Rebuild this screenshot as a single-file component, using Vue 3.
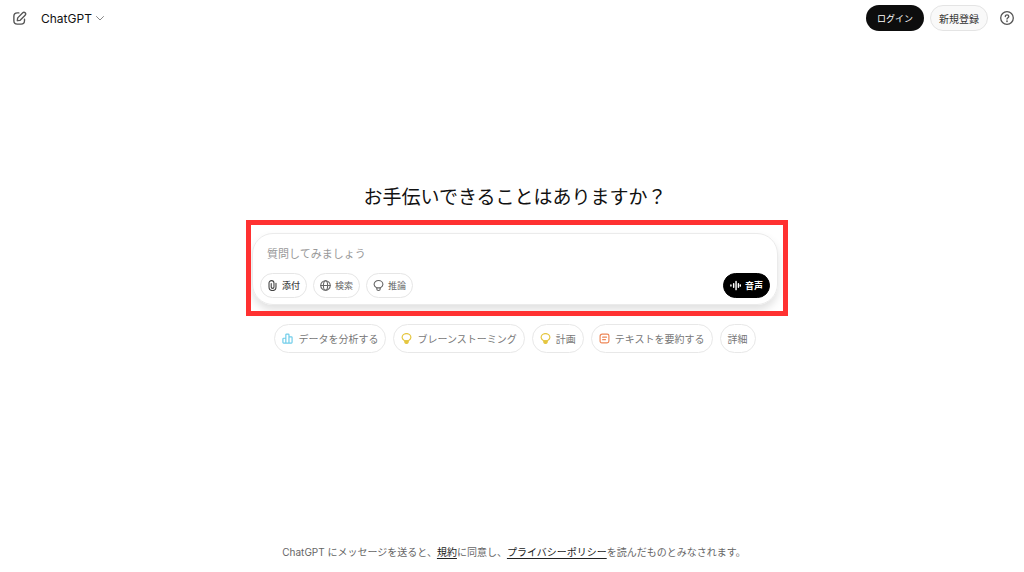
<script setup>
import { ref } from 'vue'

const message = ref('')
const tools = [
  { label: '添付', icon: 'clip', strong: true },
  { label: '検索', icon: 'globe' },
  { label: '推論', icon: 'bulb' },
]
const suggestions = [
  { label: 'データを分析する', icon: 'chart' },
  { label: 'ブレーンストーミング', icon: 'idea' },
  { label: '計画', icon: 'idea' },
  { label: 'テキストを要約する', icon: 'note' },
  { label: '詳細', icon: null },
]
</script>

<template>
  <div class="page">
    <header class="bar">
      <button class="plain" type="button" aria-label="新しいチャット">
        <svg class="compose" viewBox="0 0 24 24" fill="none" stroke="currentColor" stroke-width="2.200" stroke-linecap="round" stroke-linejoin="round">
          <path d="M11 3H8.500Q3 3 3 8.500V15.500Q3 21 8.500 21H14.500Q20 21 20 15.500V13" />
          <path d="M8.500 15.500l.6-4.500 8.100-8.100a2.600 2.600 0 0 1 3.800 3.800L13 14.900z" />
        </svg>
      </button>
      <button class="plain model" type="button">
        ChatGPT
        <svg class="chevron" viewBox="0 0 10 10" fill="none" stroke="currentColor" stroke-linecap="round" stroke-linejoin="round"><path d="M1.500 3.500 5 7l3.500-3.500" /></svg>
      </button>
      <nav class="account">
        <button class="login" type="button">ログイン</button>
        <button class="signup" type="button">新規登録</button>
        <button class="plain" type="button" aria-label="ヘルプ">
          <svg class="help" viewBox="0 0 16 16" fill="none" stroke="currentColor" stroke-width="1.300" stroke-linecap="round">
            <circle cx="8" cy="8" r="6.300" />
            <path d="M6.300 6.500c0-2.300 3.500-2.200 3.500-.1C9.800 7.700 8 7.700 8 9.100" />
            <circle cx="8" cy="11.200" r=".3" fill="currentColor" />
          </svg>
        </button>
      </nav>
    </header>

    <main class="main">
      <h1>お手伝いできることはありますか？</h1>
      <div class="stage">
        <form class="composer" @submit.prevent>
          <input v-model="message" type="text" aria-label="質問" placeholder="質問してみましょう" />
          <div class="actions">
            <button v-for="t in tools" :key="t.label" class="tool" :class="{ strong: t.strong }" type="button">
              <svg viewBox="0 0 12 12" fill="none" stroke="currentColor" stroke-width="1.200" stroke-linecap="round" stroke-linejoin="round">
                <path v-if="t.icon === 'clip'" d="M9.800 3.500v4.200a3.800 3.800 0 0 1-7.600 0V3.400a2.700 2.700 0 0 1 5.400 0v4.200a1.500 1.500 0 0 1-3 0V3.800" />
                <template v-else-if="t.icon === 'globe'">
                  <circle cx="6" cy="6" r="5.200" /><ellipse cx="6" cy="6" rx="2.300" ry="5.200" /><path d="M.8 6h10.400" />
                </template>
                <template v-else>
                  <path d="M4 8.600C2.600 7.600 1.200 6.500 1.200 4.900a4.800 4.300 0 0 1 9.600 0C10.800 6.500 9.400 7.600 8 8.600z" />
                  <path d="M4.200 8.600v1.600q0 1.200 1.800 1.200t1.800-1.200V8.600" />
                </template>
              </svg>
              {{ t.label }}
            </button>
            <button class="voice" type="button">
              <svg viewBox="0 0 12 12" fill="none" stroke="currentColor" stroke-width="1.600" stroke-linecap="round"><path d="M1 5.500v1M4 4v4M6.600 1.500v9M9.200 4v4M11.300 5.500v1" /></svg>
              音声
            </button>
          </div>
        </form>
        <div class="frame"></div>
      </div>
      <div class="chips">
        <button v-for="s in suggestions" :key="s.label" class="chip" type="button">
          <svg v-if="s.icon" :class="s.icon" viewBox="0 0 12 12" fill="none" stroke="currentColor" stroke-width="1.300" stroke-linecap="round" stroke-linejoin="round">
            <path v-if="s.icon === 'chart'" d="M1 6.500q0-.8.800-.8h2.400v5.300H1.800q-.8 0-.8-.8zM4.200 11V2q0-.8.800-.8h1.800q.8 0 .8.800v9zM7.600 4.200h2.600q.8 0 .8.800v5.200q0 .8-.8.800H7.600M4.200 11h3.400" />
            <template v-else-if="s.icon === 'idea'">
              <path d="M4 8.600C2.600 7.600 1.200 6.500 1.200 4.900a4.800 4.300 0 0 1 9.600 0C10.800 6.500 9.400 7.600 8 8.600z" />
              <path d="M4.200 8.600v1.600q0 1.200 1.800 1.200t1.800-1.200V8.600z" fill="currentColor" />
            </template>
            <path v-else d="M3.500 1.200H9q1.800 0 1.800 1.800v5.800q0 2-2 2H3.200q-2 0-2-2V3.500q0-2.300 2.300-2.300zM4 4.500h4.200M4 7.300h3" />
          </svg>
          {{ s.label }}
        </button>
      </div>
    </main>

    <footer class="legal">
      ChatGPT にメッセージを送ると、<a href="#terms">規約</a>に同意し、<a href="#privacy">プライバシーポリシー</a>を読んだものとみなされます。
    </footer>
  </div>
</template>

<style>
body {
  margin: 0;
  background: #fff;
}
</style>

<style scoped>
.page {
  box-sizing: border-box;
  min-height: 100vh;
  display: flex;
  flex-direction: column;
  font-family: Inter, "Noto Sans CJK JP", sans-serif;
  color: #111;
}
button,
input {
  font: inherit;
  color: inherit;
  box-sizing: border-box;
}
button {
  display: inline-flex;
  align-items: center;
  justify-content: center;
  border: 0;
  padding: 0;
  white-space: nowrap;
  cursor: pointer;
}
svg {
  flex: none;
  display: block;
}
.bar {
  display: flex;
  align-items: center;
  height: 36px;
  padding: 0 9px 0 12px;
}
.plain {
  background: none;
  color: #555;
}
.compose {
  width: 15px;
  height: 15px;
}
.model {
  margin-left: 14px;
  gap: 3px;
  font-size: 12px;
  color: #111;
}
.chevron {
  width: 10px;
  height: 10px;
  color: #888;
}
.account {
  display: flex;
  align-items: center;
  gap: 6px;
  margin-left: auto;
}
.login,
.signup {
  height: 26px;
  border-radius: 13px;
  padding: 0 11px;
  font-size: 9px;
}
.login {
  background: #0d0d0d;
  color: #fff;
}
.signup {
  padding: 0 8px;
  border: 1px solid #e4e4e4;
  background: #f9f9f9;
  color: #333;
  font-size: 10px;
}
.help {
  width: 16px;
  height: 16px;
  margin-left: 5px;
}
.main {
  flex: 1;
  display: flex;
  flex-direction: column;
  align-items: center;
  justify-content: center;
  padding: 0 0 44px 6px;
}
h1 {
  margin: 0 0 21px;
  font-size: 19px;
  line-height: 28px;
  font-weight: 400;
}
.stage {
  position: relative;
  width: 100%;
  max-width: 526px;
}
.composer {
  display: flex;
  flex-direction: column;
  gap: 9px;
  padding: 10px 7px 6px;
  border: 1px solid #ebebeb;
  border-radius: 21px;
  box-shadow: 0 5px 9px rgba(0, 0, 0, 0.12);
}
.composer input {
  height: 20px;
  margin: 0 7px;
  padding: 0;
  border: 0;
  outline: 0;
  background: none;
  font-size: 11px;
}
.composer input::placeholder {
  color: #999;
  opacity: 1;
}
.actions {
  display: flex;
  gap: 6px;
}
.tool,
.voice {
  height: 25px;
  padding: 0 6px;
  gap: 4px;
  border: 1px solid #e6e6e6;
  border-radius: 13px;
  background: #fff;
  color: #666;
  font-size: 9px;
}
.tool svg,
.voice svg {
  width: 11px;
  height: 11px;
}
.strong {
  font-weight: 500;
  color: #444;
}
.voice {
  margin-left: auto;
  border-color: #000;
  background: #000;
  color: #fff;
  font-weight: 700;
}
.frame {
  position: absolute;
  inset: -13px -10px -11px -6px;
  border: 5px solid #ff3131;
  pointer-events: none;
}
.chips {
  display: flex;
  flex-wrap: wrap;
  justify-content: center;
  gap: 7px;
  margin-top: 19px;
}
.chip {
  height: 29px;
  padding: 0 7px;
  gap: 5px;
  border: 1px solid #e8e8e8;
  border-radius: 15px;
  background: #fff;
  color: #777;
  font-size: 10px;
}
.chip svg {
  width: 11px;
  height: 11px;
}
.chart {
  color: #6fcdea;
}
.idea {
  color: #e5c640;
}
.note {
  color: #ee8757;
}
.legal {
  padding: 0 0 12px 4px;
  text-align: center;
  font-size: 10px;
  line-height: 16px;
  color: #666;
}
.legal a {
  color: #222;
  text-underline-offset: 2px;
}
</style>
